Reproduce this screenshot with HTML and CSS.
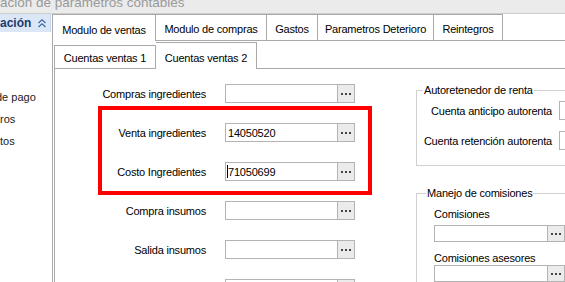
FILE: index.html
```html
<!DOCTYPE html>
<html lang="es">
<head>
<meta charset="utf-8">
<title>Parametros contables</title>
<link rel="stylesheet" href="styles.css">
</head>
<body>
<div class="titlebar"><span class="title">ación de parametros contables</span></div>
<div class="app">
  <aside class="sidebar">
    <div class="side-head">
      <span class="side-title">ación</span>
      <svg class="chev" width="8" height="9" viewBox="0 0 8 9"><path d="M0.5 4 L4 0.8 L7.5 4 M0.5 8 L4 4.8 L7.5 8" fill="none" stroke="#3d68a8" stroke-width="1.2"/></svg>
    </div>
    <ul class="side-list">
      <li class="cut">de pago</li>
      <li>ros</li>
      <li>tos</li>
    </ul>
  </aside>
  <main class="main">
    <div class="tabs">
      <div class="tab tab-active w-ventas">Modulo de ventas</div>
      <div class="tab w-compras">Modulo de compras</div>
      <div class="tab w-gastos">Gastos</div>
      <div class="tab w-deterioro">Parametros Deterioro</div>
      <div class="tab w-reintegros">Reintegros</div>
    </div>
    <div class="tab-panel">
      <div class="subtabs">
        <div class="subtab subtab-first w-c1">Cuentas ventas 1</div>
        <div class="subtab subtab-active w-c2">Cuentas ventas 2</div>
      </div>
      <div class="subpanel">
        <div class="form-col">
          <div class="label">Compras ingredientes</div>
          <div class="field"><div class="field-input"></div><div class="field-btn"></div></div>
          <div class="label">Venta ingredientes</div>
          <div class="field"><div class="field-input">14050520</div><div class="field-btn"></div></div>
          <div class="label">Costo Ingredientes</div>
          <div class="field"><div class="field-input"><span class="caret"></span>71050699</div><div class="field-btn"></div></div>
          <div class="label">Compra insumos</div>
          <div class="field"><div class="field-input"></div><div class="field-btn"></div></div>
          <div class="label">Salida insumos</div>
          <div class="field"><div class="field-input"></div><div class="field-btn"></div></div>
          <div class="label"></div>
          <div class="field"><div class="field-input"></div><div class="field-btn"></div></div>
        </div>
        <div class="side-col">
          <fieldset class="group">
            <legend class="group-title">Autoretenedor de renta</legend>
            <div class="group-grid">
              <div class="label">Cuenta anticipo autorenta</div>
              <div class="field field-open"><div class="field-input"></div></div>
              <div class="label">Cuenta retención autorenta</div>
              <div class="field field-open"><div class="field-input"></div></div>
            </div>
          </fieldset>
          <fieldset class="group group-com">
            <legend class="group-title group-title-com">Manejo de comisiones</legend>
            <div class="com-wrap">
              <div class="com-label">Comisiones</div>
              <div class="field field-sm"><div class="field-input"></div><div class="field-btn"></div></div>
              <div class="com-label com-label-2">Comisiones asesores</div>
              <div class="field field-sm"><div class="field-input"></div><div class="field-btn"></div></div>
            </div>
          </fieldset>
        </div>
        <div class="highlight"></div>
      </div>
    </div>
  </main>
</div>
</body>
</html>
```
FILE: styles.css
```css
html, body {
  margin: 0;
  padding: 0;
}
body {
  width: 565px;
  height: 282px;
  overflow: hidden;
  background: #ffffff;
  font-family: "Liberation Sans", Arial, sans-serif;
  font-size: 11px;
  letter-spacing: -0.2px;
  color: #000000;
}

/* title bar */
.titlebar {
  height: 13px;
  background: #ebebeb;
  border-bottom: 1px solid #cdcdcd;
  overflow: hidden;
}
.title {
  display: block;
  margin-top: -5px;
  font-size: 13.5px;
  line-height: 15px;
  letter-spacing: 0;
  color: #9a9a9a;
  white-space: nowrap;
}

.app {
  display: flex;
  height: 268px;
}

/* sidebar */
.sidebar {
  width: 52px;
  flex: none;
  overflow: hidden;
}
.side-head {
  width: 51px;
  height: 18px;
  box-sizing: border-box;
  background: #dbe7f6;
  border-right: 1px solid #c6d7ec;
  display: flex;
  align-items: center;
  justify-content: space-between;
  padding-right: 4px;
}
.side-title {
  font-weight: bold;
  font-size: 12px;
  letter-spacing: 0;
  color: #1d3a6b;
  white-space: nowrap;
}
.chev {
  display: block;
}
.side-list {
  list-style: none;
  margin: 0;
  padding: 54px 0 0;
  font-size: 11px;
  letter-spacing: 0;
}
.side-list li {
  line-height: 22px;
  white-space: nowrap;
  color: #1a1a1a;
}
.side-list .cut {
  text-indent: -4px;
}

/* main tabs */
.main {
  flex: 1;
  min-width: 0;
  border-left: 1px solid #a9a9a9;
  overflow: hidden;
}
.tabs {
  display: flex;
  align-items: flex-end;
  height: 26px;
  border-bottom: 1px solid #a9a9a9;
}
.tab {
  flex: none;
  height: 26px;
  box-sizing: border-box;
  border-top: 1px solid #a9a9a9;
  border-right: 1px solid #a9a9a9;
  background: #ffffff;
  display: flex;
  align-items: center;
  justify-content: center;
  padding-top: 3px;
  white-space: nowrap;
}
.tab-active {
  height: 27px;
  margin-bottom: -1px;
  position: relative;
}
.w-ventas { width: 103px; }
.w-compras { width: 111px; }
.w-gastos { width: 51px; }
.w-deterioro { width: 116px; }
.w-reintegros { width: 69px; }

.tab-panel {
  padding-left: 1px;
}
.subtabs {
  display: flex;
  align-items: flex-end;
  height: 27px;
  border-bottom: 1px solid #a9a9a9;
}
.subtab {
  flex: none;
  height: 23px;
  box-sizing: border-box;
  border-top: 1px solid #a9a9a9;
  border-right: 1px solid #a9a9a9;
  background: #ffffff;
  display: flex;
  align-items: center;
  justify-content: center;
  padding-top: 2px;
  white-space: nowrap;
}
.subtab-first {
  border-left: 1px solid #a9a9a9;
}
.subtab-active {
  height: 27px;
  margin-bottom: -1px;
  padding-top: 3px;
  position: relative;
}
.w-c1 { width: 102px; }
.w-c2 { width: 101px; }

.subpanel {
  position: relative;
  display: flex;
  height: 213px;
  border-left: 1px solid #a9a9a9;
}

/* left form */
.form-col {
  flex: none;
  width: 360px;
  padding-top: 15px;
  display: grid;
  grid-template-columns: 151px 130px;
  grid-auto-rows: 19px;
  column-gap: 19px;
  row-gap: 20px;
  align-content: start;
}
.label {
  text-align: right;
  align-self: center;
  white-space: nowrap;
  line-height: 13px;
  padding-top: 1px;
}

.field {
  display: flex;
  height: 19px;
  box-sizing: border-box;
  border: 1px solid #b3b3b3;
  background: #ffffff;
}
.field-input {
  flex: 1;
  display: flex;
  align-items: center;
  padding-left: 2px;
  white-space: nowrap;
}
.caret {
  width: 1px;
  height: 13px;
  background: #000000;
  margin-left: -1px;
}
.field-btn {
  position: relative;
  flex: none;
  width: 17px;
  box-sizing: border-box;
  border-left: 1px solid #b3b3b3;
  background: #ebebeb;
}
.field-btn::before {
  content: "";
  position: absolute;
  left: 3px;
  top: calc(50% - 1px);
  width: 2px;
  height: 2px;
  background: #444444;
  box-shadow: 4px 0 0 #444444, 8px 0 0 #444444;
}

/* right groups */
.side-col {
  flex: none;
  width: 300px;
  padding-top: 14px;
  padding-left: 1px;
}
.group {
  margin: 0;
  width: 280px;
  border: 1px solid #d0d0d0;
  padding: 4px 0 15px 6px;
}
.group-title {
  padding: 0 1px;
  line-height: 14px;
  white-space: nowrap;
}
.group-title-com {
  margin-left: 3px;
}
.group-grid {
  display: grid;
  grid-template-columns: 129px 150px;
  grid-auto-rows: 19px;
  column-gap: 7px;
  row-gap: 11px;
}
.field-open {
  border-right: none;
}
.group-com {
  margin-top: 20px;
  padding-top: 8px;
  padding-bottom: 20px;
}
.com-wrap {
  padding-left: 11px;
}
.com-label {
  line-height: 13px;
  margin-bottom: 4px;
  white-space: nowrap;
}
.com-label-2 {
  margin-top: 10px;
  margin-bottom: 0;
}
.field-sm {
  width: 131px;
  height: 17px;
}

/* red annotation */
.highlight {
  position: absolute;
  left: 43px;
  top: 37px;
  width: 274px;
  height: 89px;
  box-sizing: border-box;
  border: 4px solid #ff0000;
  pointer-events: none;
}
```
